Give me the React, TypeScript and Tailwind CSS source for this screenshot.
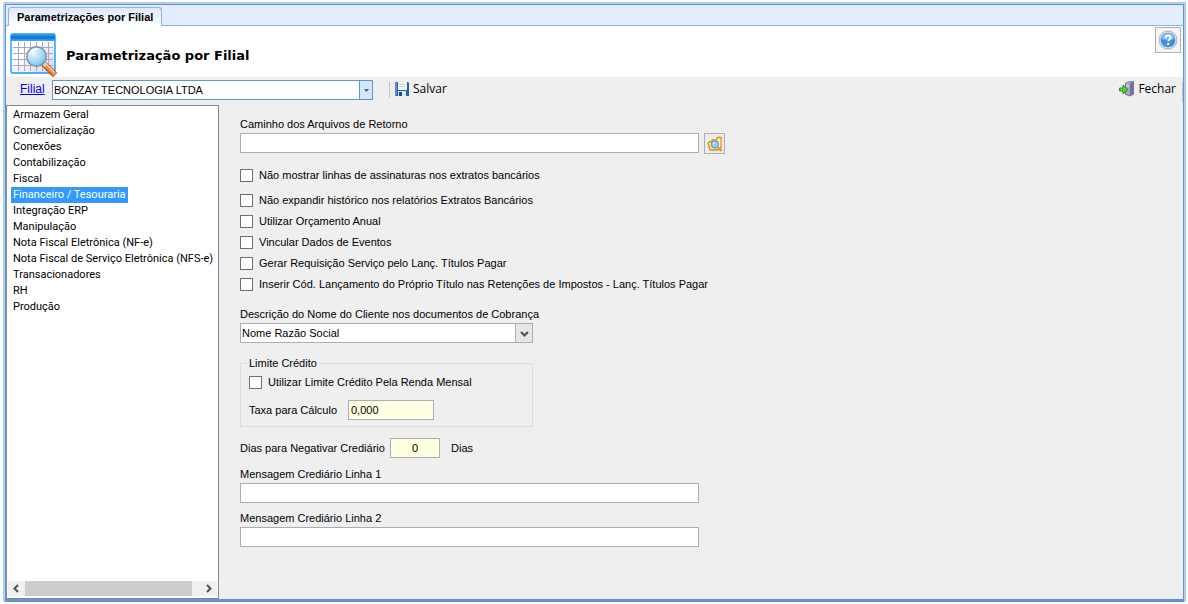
import { useState } from "react";
import type { ReactNode } from "react";

const sections = [
  "Armazem Geral",
  "Comercialização",
  "Conexões",
  "Contabilização",
  "Fiscal",
  "Financeiro / Tesouraria",
  "Integração ERP",
  "Manipulação",
  "Nota Fiscal Eletrônica (NF-e)",
  "Nota Fiscal de Serviço Eletrônica (NFS-e)",
  "Transacionadores",
  "RH",
  "Produção",
];

const options = [
  "Não expandir histórico nos relatórios Extratos Bancários",
  "Utilizar Orçamento Anual",
  "Vincular Dados de Eventos",
  "Gerar Requisição Serviço pelo Lanç. Títulos Pagar",
  "Inserir Cód. Lançamento do Próprio Título nas Retenções de Impostos - Lanç. Títulos Pagar",
];

const CalendarSearchIcon = () => (
  <svg width="48" height="44" viewBox="0 0 48 44" aria-hidden="true">
    <defs>
      <linearGradient id="calTop" x1="0" y1="0" x2="0" y2="1">
        <stop offset="0" stopColor="#35a5f5" />
        <stop offset="0.5" stopColor="#0f6fd0" />
        <stop offset="1" stopColor="#3fb4f8" />
      </linearGradient>
      <linearGradient id="calPage" x1="0" y1="0" x2="1" y2="1">
        <stop offset="0.4" stopColor="#fff" />
        <stop offset="1" stopColor="#cfcffa" />
      </linearGradient>
      <radialGradient id="lens" cx="0.35" cy="0.3" r="0.8">
        <stop offset="0" stopColor="#eefaff" />
        <stop offset="0.6" stopColor="#a5d8f2" />
        <stop offset="1" stopColor="#6fb6de" />
      </radialGradient>
    </defs>
    <rect x="1" y="1" width="44" height="39" rx="1.5" fill="url(#calPage)" stroke="#1b9bf0" strokeWidth="1.4" />
    <rect x="1" y="1" width="44" height="7" rx="1.5" fill="url(#calTop)" />
    <path
      d="M3 14.5H43M3 20.5H43M3 26.5H43M3 32.5H43M8.5 9V38M14.5 9V38M20.5 9V38M26.5 9V38M32.5 9V38M38.5 9V38"
      stroke="#a9a9b8"
      fill="none"
    />
    <path d="M34 31L45 42" stroke="#9c4a12" strokeWidth="6" />
    <path d="M35 31.500L45 41.500" stroke="#f58a32" strokeWidth="4.500" />
    <path d="M35.500 30.500L44.500 39.500" stroke="#ffd0a0" strokeWidth="1.200" />
    <path d="M33 29.500L36 32.500" stroke="#d5d5dd" strokeWidth="4" />
    <circle cx="26.500" cy="23.500" r="9.800" fill="url(#lens)" stroke="#7f93a3" strokeWidth="1.500" />
    <path d="M20 21a8 8 0 0 1 8-5" stroke="#fff" strokeWidth="1.500" fill="none" />
  </svg>
);

const HelpIcon = () => (
  <svg width="20" height="20" viewBox="0 0 20 20" aria-hidden="true">
    <circle cx="10" cy="10" r="9" fill="#d8dde4" stroke="#a9b2bd" />
    <circle cx="10" cy="10" r="7.300" fill="#3f8ee4" />
    <path d="M3.500 9a6.500 6 0 0 1 13 0q-6 2-13 0" fill="#7cbaf5" />
    <path d="M7.500 8.200c0-3.600 5.200-3.300 5.200-.6 0 1.900-2.500 1.800-2.500 4" stroke="#fff" strokeWidth="1.900" fill="none" />
    <rect x="9.200" y="13" width="2" height="2" fill="#fff" />
  </svg>
);

const SaveIcon = () => (
  <svg width="16" height="16" viewBox="0 0 16 16" aria-hidden="true">
    <path d="M1 1h13l1 1v13H2l-1-1z" fill="#1d62b8" />
    <path d="M1 1h2v13H1z" fill="#4f93dc" />
    <rect x="4" y="1" width="9" height="8" fill="#f4f6f8" />
    <path d="M5 3.500h6M5 5.500h6" stroke="#d0d4da" />
    <rect x="4" y="10" width="8" height="5" fill="#dfe5ea" />
    <rect x="5" y="11" width="3" height="4" fill="#174a86" />
  </svg>
);

const ExitIcon = () => (
  <svg width="16" height="16" viewBox="0 0 16 16" aria-hidden="true">
    <path d="M6.500 2.500L9 1l5.500-.5v12.500L11 15l-4.500-1.500z" fill="#a4a4cc" stroke="#62628c" strokeWidth="0.800" />
    <path d="M11 2.500l3.500-2v12.500L11 15z" fill="#73739f" />
    <path d="M7.500 3.500h2.500v2.500H7.500z" fill="#d0d0e8" />
    <path d="M.5 7H4V4l5 4.500-5 4.500v-3H.5z" fill="#55cf2f" stroke="#248a14" strokeWidth="0.900" />
  </svg>
);

const FolderSearchIcon = () => (
  <svg width="16" height="16" viewBox="0 0 16 16" aria-hidden="true">
    <path d="M3 14L1 7l2-1.500 2 1V4h4l1.500-2.500H14V12l-3 2z" fill="#fbe48a" stroke="#c9961c" strokeWidth="1.300" />
    <path d="M11 3.500h1.500V10" fill="none" stroke="#fff8d8" strokeWidth="1.500" />
    <circle cx="8" cy="8.500" r="3.600" fill="#8fcdf2" stroke="#5f8db0" />
    <path d="M6 8a2 2 0 0 1 2-1.500" stroke="#fff" fill="none" />
    <path d="M11 11.500l3.500 3.500" stroke="#ee8a3c" strokeWidth="2.200" />
  </svg>
);

const Chevron = ({ d }: { d: string }) => (
  <svg width="9" height="9" viewBox="0 0 9 9" fill="none" stroke="#505050" strokeWidth="2" aria-hidden="true">
    <path d={d} />
  </svg>
);

const Check = ({ children }: { children: ReactNode }) => (
  <label className="flex h-[21px] items-center gap-1.5">
    <input
      type="checkbox"
      className="size-[13px] shrink-0 appearance-none border border-[#707070] bg-white checked:bg-[#3399ff]"
    />
    {children}
  </label>
);

const TextField = ({ id, label }: { id: string; label: string }) => (
  <div className="max-w-[459px]">
    <label htmlFor={id} className="block h-[18px] leading-[18px]">
      {label}
    </label>
    <input id={id} type="text" className="block h-5 w-full border border-[#abadb3] bg-white px-1" />
  </div>
);

export default function App() {
  const [selected, setSelected] = useState("Financeiro / Tesouraria");

  return (
    <div className="flex min-h-screen flex-col bg-white pt-[2px] pr-[2px] pb-[2px] pl-[3px] font-['Liberation_Sans',Arial,sans-serif] text-[11px] text-black">
      <div className="flex flex-1 flex-col border-2 border-b-0 border-[#b0cdf3]">
        <div className="flex flex-1 flex-col border border-b-[3px] border-[#6593cf] bg-[#efefef]">
          <div className="flex h-[21px] items-end border-b border-[#8db2e3] bg-[#e3efff] pl-[2px]">
            <button
              type="button"
              className="-mb-px h-[19px] rounded-t-[3px] border border-b-0 border-[#8db2e3] bg-gradient-to-b from-[#dbe9fb] to-white px-2 font-bold"
            >
              Parametrizações por Filial
            </button>
          </div>

          <header className="flex h-[51px] items-start justify-between bg-white">
            <div className="flex items-center gap-2 pt-[7px] pl-1">
              <CalendarSearchIcon />
              <h1 className="pt-0.5 font-['DejaVu_Sans',Verdana,sans-serif] text-[13px] font-bold">
                Parametrização por Filial
              </h1>
            </div>
            <button
              type="button"
              aria-label="Ajuda"
              className="mt-px mr-0.5 flex size-[26px] items-center justify-center border border-[#b0b0b0] bg-[#f5f5f5]"
            >
              <HelpIcon />
            </button>
          </header>

          <div className="flex h-7 items-start pt-[3px]">
            <label
              htmlFor="filial"
              className="ml-3.5 w-8 text-[12px] leading-[18px] text-[#0000ff] underline"
            >
              Filial
            </label>
            <div className="relative w-[321px]">
              <select
                id="filial"
                className="block h-5 w-full appearance-none border border-[#6593cf] bg-white pl-px"
              >
                <option>BONZAY TECNOLOGIA LTDA</option>
              </select>
              <span className="pointer-events-none absolute top-0 right-0 flex h-5 w-3.5 items-center justify-center border border-[#6593cf] bg-[#d6e5f8]">
                <svg width="5" height="3" viewBox="0 0 5 3" aria-hidden="true">
                  <path d="M0 0h5L2.500 3z" fill="#3d5f8f" />
                </svg>
              </span>
            </div>
            <span className="mt-0.5 ml-4 h-4 w-px bg-[#c5c5c5]" />
            <button
              type="button"
              className="ml-1 flex items-center gap-[3px] font-['Open_Sans','Noto_Sans',sans-serif] text-[12px] leading-[18px]"
            >
              <SaveIcon />
              Salvar
            </button>
            <button
              type="button"
              className="mr-1.5 ml-auto flex items-center gap-[3px] font-['Open_Sans','Noto_Sans',sans-serif] text-[12px] leading-[18px]"
            >
              <ExitIcon />
              Fechar
            </button>
            <span className="mt-0.5 h-5 w-px bg-[#c5c5c5]" />
          </div>

          <main className="flex flex-1">
            <nav className="flex w-[213px] shrink-0 flex-col border border-[#828790] bg-white p-px pb-0.5">
              <ul className="flex-1 pl-[3px] font-['Roboto',sans-serif]">
                {sections.map((name) => (
                  <li key={name} className="flex h-4">
                    <button
                      type="button"
                      onClick={() => setSelected(name)}
                      className={
                        name === selected
                          ? "bg-[#3399ff] px-0.5 leading-4 whitespace-nowrap text-white"
                          : "px-0.5 leading-4 whitespace-nowrap"
                      }
                    >
                      {name}
                    </button>
                  </li>
                ))}
              </ul>
              <div className="flex h-[15px] bg-[#f0f0f0]">
                <button type="button" aria-label="Rolar à esquerda" className="flex w-[17px] items-center justify-center">
                  <Chevron d="M6 1L2.500 4.500L6 8" />
                </button>
                <div className="flex-1 pr-2">
                  <div className="h-full bg-[#cdcdcd]" />
                </div>
                <button type="button" aria-label="Rolar à direita" className="flex w-[17px] items-center justify-center">
                  <Chevron d="M3 1L6.500 4.500L3 8" />
                </button>
              </div>
            </nav>

            <form className="flex-1 pt-[10px] pl-[21px]">
              <label htmlFor="retorno" className="block h-[18px] leading-[18px]">
                Caminho dos Arquivos de Retorno
              </label>
              <div className="flex h-5 gap-[5px]">
                <input
                  id="retorno"
                  type="text"
                  className="h-5 w-full max-w-[459px] border border-[#abadb3] bg-white px-1"
                />
                <button
                  type="button"
                  aria-label="Procurar pasta"
                  className="flex size-[21px] shrink-0 items-center justify-center border border-[#abadb3] bg-[#ececec]"
                >
                  <FolderSearchIcon />
                </button>
              </div>

              <div className="mt-3">
                <Check>Não mostrar linhas de assinaturas nos extratos bancários</Check>
              </div>
              <div className="mt-1">
                {options.map((text) => (
                  <Check key={text}>{text}</Check>
                ))}
              </div>

              <label htmlFor="descricao" className="mt-[10px] block h-[18px] leading-[18px]">
                Descrição do Nome do Cliente nos documentos de Cobrança
              </label>
              <div className="relative w-[293px]">
                <select
                  id="descricao"
                  className="block h-5 w-full appearance-none border border-[#abadb3] bg-white pl-px"
                >
                  <option>Nome Razão Social</option>
                </select>
                <span className="pointer-events-none absolute top-0 right-0 flex h-5 w-[18px] items-center justify-center border border-[#abadb3] bg-[#e6e6e6]">
                  <Chevron d="M1 3L4.500 6.500L8 3" />
                </span>
              </div>

              <fieldset className="mt-[11px] w-[293px] border border-[#dcdcdc] px-2 pb-1.5">
                <legend className="-ml-0.5 h-[18px] px-0.5 leading-[18px]">Limite Crédito</legend>
                <Check>Utilizar Limite Crédito Pela Renda Mensal</Check>
                <div className="mt-[7px] flex items-center">
                  <label htmlFor="taxa" className="w-[99px]">
                    Taxa para Cálculo
                  </label>
                  <input
                    id="taxa"
                    type="text"
                    defaultValue="0,000"
                    className="h-5 w-[86px] border border-[#abadb3] bg-[#ffffe1] px-0.5"
                  />
                </div>
              </fieldset>

              <div className="mt-[11px] flex items-center">
                <label htmlFor="dias" className="w-[150px]">
                  Dias para Negativar Crediário
                </label>
                <input
                  id="dias"
                  type="text"
                  defaultValue="0"
                  className="h-5 w-[50px] border border-[#abadb3] bg-[#ffffe1] text-center"
                />
                <span className="ml-[11px]">Dias</span>
              </div>

              <div className="mt-[7px] flex flex-col gap-1.5">
                <TextField id="linha1" label="Mensagem Crediário Linha 1" />
                <TextField id="linha2" label="Mensagem Crediário Linha 2" />
              </div>
            </form>
          </main>
        </div>
      </div>
    </div>
  );
}
